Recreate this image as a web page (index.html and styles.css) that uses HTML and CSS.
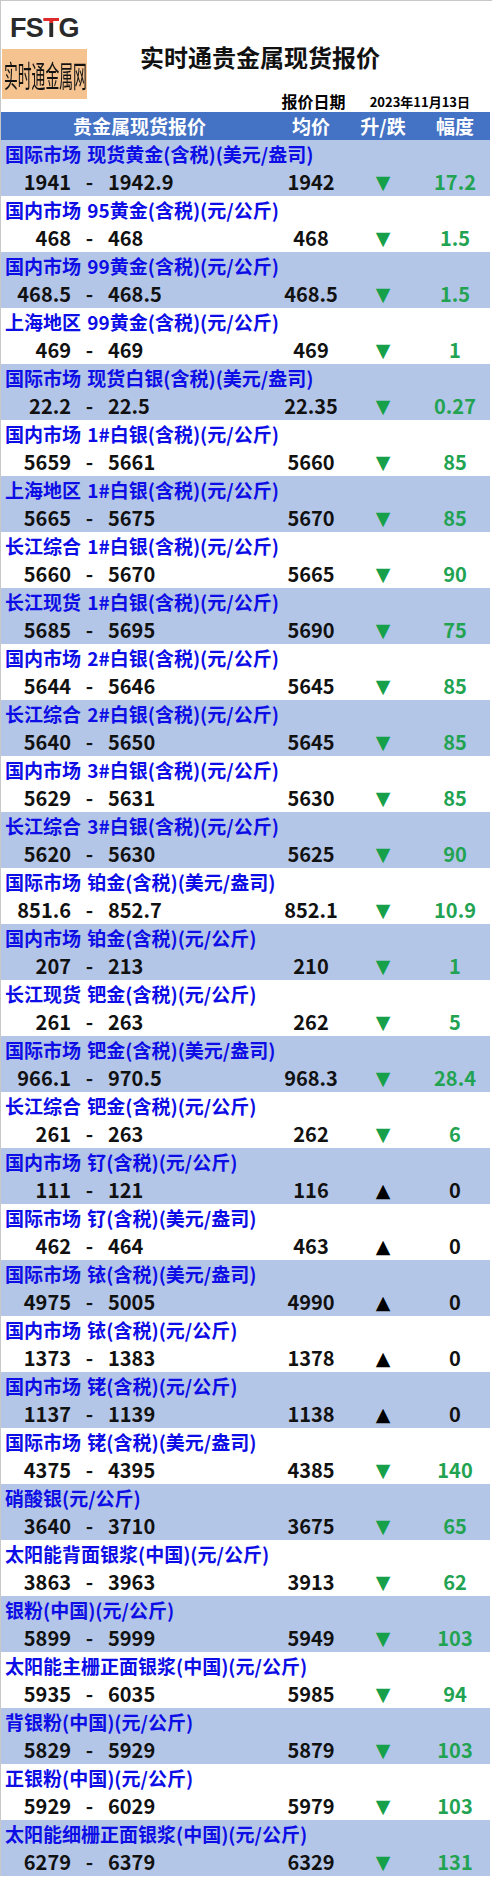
FILE: index.html
```html
<!DOCTYPE html>
<html lang="zh-CN">
<head>
<meta charset="utf-8">
<title>实时通贵金属现货报价</title>
<link rel="stylesheet" href="styles.css">
</head>
<body>
<div class="page">
  <div class="top">
    <div class="brand">
      <div class="logo">FS<span class="t">T</span>G</div>
      <div class="tag"><span class="tag-text">实时通金属网</span></div>
    </div>
    <div class="head">
      <div class="title">实时通贵金属现货报价</div>
      <div class="date"><span class="date-label">报价日期</span><span class="date-value">2023年11月13日</span></div>
    </div>
  </div>

  <div class="thead">
    <span class="th-name">贵金属现货报价</span>
    <span class="th-avg">均价</span>
    <span class="th-dir">升/跌</span>
    <span class="th-amp">幅度</span>
  </div>

  <div class="item alt"><div class="name">国际市场 现货黄金(含税)(美元/盎司)</div><div class="vals"><span class="lo">1941</span><span class="dash">-</span><span class="hi">1942.9</span><span class="avg">1942</span><span class="dir down">▼</span><span class="amp down">17.2</span></div></div>
  <div class="item"><div class="name">国内市场 95黄金(含税)(元/公斤)</div><div class="vals"><span class="lo">468</span><span class="dash">-</span><span class="hi">468</span><span class="avg">468</span><span class="dir down">▼</span><span class="amp down">1.5</span></div></div>
  <div class="item alt"><div class="name">国内市场 99黄金(含税)(元/公斤)</div><div class="vals"><span class="lo">468.5</span><span class="dash">-</span><span class="hi">468.5</span><span class="avg">468.5</span><span class="dir down">▼</span><span class="amp down">1.5</span></div></div>
  <div class="item"><div class="name">上海地区 99黄金(含税)(元/公斤)</div><div class="vals"><span class="lo">469</span><span class="dash">-</span><span class="hi">469</span><span class="avg">469</span><span class="dir down">▼</span><span class="amp down">1</span></div></div>
  <div class="item alt"><div class="name">国际市场 现货白银(含税)(美元/盎司)</div><div class="vals"><span class="lo">22.2</span><span class="dash">-</span><span class="hi">22.5</span><span class="avg">22.35</span><span class="dir down">▼</span><span class="amp down">0.27</span></div></div>
  <div class="item"><div class="name">国内市场 1#白银(含税)(元/公斤)</div><div class="vals"><span class="lo">5659</span><span class="dash">-</span><span class="hi">5661</span><span class="avg">5660</span><span class="dir down">▼</span><span class="amp down">85</span></div></div>
  <div class="item alt"><div class="name">上海地区 1#白银(含税)(元/公斤)</div><div class="vals"><span class="lo">5665</span><span class="dash">-</span><span class="hi">5675</span><span class="avg">5670</span><span class="dir down">▼</span><span class="amp down">85</span></div></div>
  <div class="item"><div class="name">长江综合 1#白银(含税)(元/公斤)</div><div class="vals"><span class="lo">5660</span><span class="dash">-</span><span class="hi">5670</span><span class="avg">5665</span><span class="dir down">▼</span><span class="amp down">90</span></div></div>
  <div class="item alt"><div class="name">长江现货 1#白银(含税)(元/公斤)</div><div class="vals"><span class="lo">5685</span><span class="dash">-</span><span class="hi">5695</span><span class="avg">5690</span><span class="dir down">▼</span><span class="amp down">75</span></div></div>
  <div class="item"><div class="name">国内市场 2#白银(含税)(元/公斤)</div><div class="vals"><span class="lo">5644</span><span class="dash">-</span><span class="hi">5646</span><span class="avg">5645</span><span class="dir down">▼</span><span class="amp down">85</span></div></div>
  <div class="item alt"><div class="name">长江综合 2#白银(含税)(元/公斤)</div><div class="vals"><span class="lo">5640</span><span class="dash">-</span><span class="hi">5650</span><span class="avg">5645</span><span class="dir down">▼</span><span class="amp down">85</span></div></div>
  <div class="item"><div class="name">国内市场 3#白银(含税)(元/公斤)</div><div class="vals"><span class="lo">5629</span><span class="dash">-</span><span class="hi">5631</span><span class="avg">5630</span><span class="dir down">▼</span><span class="amp down">85</span></div></div>
  <div class="item alt"><div class="name">长江综合 3#白银(含税)(元/公斤)</div><div class="vals"><span class="lo">5620</span><span class="dash">-</span><span class="hi">5630</span><span class="avg">5625</span><span class="dir down">▼</span><span class="amp down">90</span></div></div>
  <div class="item"><div class="name">国际市场 铂金(含税)(美元/盎司)</div><div class="vals"><span class="lo">851.6</span><span class="dash">-</span><span class="hi">852.7</span><span class="avg">852.1</span><span class="dir down">▼</span><span class="amp down">10.9</span></div></div>
  <div class="item alt"><div class="name">国内市场 铂金(含税)(元/公斤)</div><div class="vals"><span class="lo">207</span><span class="dash">-</span><span class="hi">213</span><span class="avg">210</span><span class="dir down">▼</span><span class="amp down">1</span></div></div>
  <div class="item"><div class="name">长江现货 钯金(含税)(元/公斤)</div><div class="vals"><span class="lo">261</span><span class="dash">-</span><span class="hi">263</span><span class="avg">262</span><span class="dir down">▼</span><span class="amp down">5</span></div></div>
  <div class="item alt"><div class="name">国际市场 钯金(含税)(美元/盎司)</div><div class="vals"><span class="lo">966.1</span><span class="dash">-</span><span class="hi">970.5</span><span class="avg">968.3</span><span class="dir down">▼</span><span class="amp down">28.4</span></div></div>
  <div class="item"><div class="name">长江综合 钯金(含税)(元/公斤)</div><div class="vals"><span class="lo">261</span><span class="dash">-</span><span class="hi">263</span><span class="avg">262</span><span class="dir down">▼</span><span class="amp down">6</span></div></div>
  <div class="item alt"><div class="name">国内市场 钌(含税)(元/公斤)</div><div class="vals"><span class="lo">111</span><span class="dash">-</span><span class="hi">121</span><span class="avg">116</span><span class="dir up">▲</span><span class="amp">0</span></div></div>
  <div class="item"><div class="name">国际市场 钌(含税)(美元/盎司)</div><div class="vals"><span class="lo">462</span><span class="dash">-</span><span class="hi">464</span><span class="avg">463</span><span class="dir up">▲</span><span class="amp">0</span></div></div>
  <div class="item alt"><div class="name">国际市场 铱(含税)(美元/盎司)</div><div class="vals"><span class="lo">4975</span><span class="dash">-</span><span class="hi">5005</span><span class="avg">4990</span><span class="dir up">▲</span><span class="amp">0</span></div></div>
  <div class="item"><div class="name">国内市场 铱(含税)(元/公斤)</div><div class="vals"><span class="lo">1373</span><span class="dash">-</span><span class="hi">1383</span><span class="avg">1378</span><span class="dir up">▲</span><span class="amp">0</span></div></div>
  <div class="item alt"><div class="name">国内市场 铑(含税)(元/公斤)</div><div class="vals"><span class="lo">1137</span><span class="dash">-</span><span class="hi">1139</span><span class="avg">1138</span><span class="dir up">▲</span><span class="amp">0</span></div></div>
  <div class="item"><div class="name">国际市场 铑(含税)(美元/盎司)</div><div class="vals"><span class="lo">4375</span><span class="dash">-</span><span class="hi">4395</span><span class="avg">4385</span><span class="dir down">▼</span><span class="amp down">140</span></div></div>
  <div class="item alt"><div class="name">硝酸银(元/公斤)</div><div class="vals"><span class="lo">3640</span><span class="dash">-</span><span class="hi">3710</span><span class="avg">3675</span><span class="dir down">▼</span><span class="amp down">65</span></div></div>
  <div class="item"><div class="name">太阳能背面银浆(中国)(元/公斤)</div><div class="vals"><span class="lo">3863</span><span class="dash">-</span><span class="hi">3963</span><span class="avg">3913</span><span class="dir down">▼</span><span class="amp down">62</span></div></div>
  <div class="item alt"><div class="name">银粉(中国)(元/公斤)</div><div class="vals"><span class="lo">5899</span><span class="dash">-</span><span class="hi">5999</span><span class="avg">5949</span><span class="dir down">▼</span><span class="amp down">103</span></div></div>
  <div class="item"><div class="name">太阳能主栅正面银浆(中国)(元/公斤)</div><div class="vals"><span class="lo">5935</span><span class="dash">-</span><span class="hi">6035</span><span class="avg">5985</span><span class="dir down">▼</span><span class="amp down">94</span></div></div>
  <div class="item alt"><div class="name">背银粉(中国)(元/公斤)</div><div class="vals"><span class="lo">5829</span><span class="dash">-</span><span class="hi">5929</span><span class="avg">5879</span><span class="dir down">▼</span><span class="amp down">103</span></div></div>
  <div class="item"><div class="name">正银粉(中国)(元/公斤)</div><div class="vals"><span class="lo">5929</span><span class="dash">-</span><span class="hi">6029</span><span class="avg">5979</span><span class="dir down">▼</span><span class="amp down">103</span></div></div>
  <div class="item alt"><div class="name">太阳能细栅正面银浆(中国)(元/公斤)</div><div class="vals"><span class="lo">6279</span><span class="dash">-</span><span class="hi">6379</span><span class="avg">6329</span><span class="dir down">▼</span><span class="amp down">131</span></div></div>
</div>
</body>
</html>
```

FILE: styles.css
```css
html, body {
  margin: 0;
  padding: 0;
  background: #ffffff;
}

.page {
  width: 492px;
  box-sizing: border-box;
  border-top: 1px solid #c8c8c8;
  border-left: 1px solid #c8c8c8;
  padding-right: 2px;
  font-family: "Noto Sans CJK SC", "Noto Sans", sans-serif;
  color: #000;
}

/* ---------- top area ---------- */
.top {
  display: flex;
  height: 111px;
}

.brand {
  width: 89px;
  display: flex;
  flex-direction: column;
}

.logo {
  margin: 12px 0 0 9px;
  font: bold 27px/30px "Liberation Sans", Arial, sans-serif;
  letter-spacing: -0.8px;
  color: #2a2a2a;
}

.logo .t {
  background: linear-gradient(#e0292b 0 32%, #2a2a2a 32% 100%);
  -webkit-background-clip: text;
  background-clip: text;
  color: transparent;
}

.tag {
  margin: 6px 0 0 1px;
  width: 85px;
  height: 50px;
  background: #f4c38f;
  overflow: hidden;
  display: flex;
  align-items: center;
}

.tag-text {
  display: inline-block;
  font-size: 30px;
  line-height: 34px;
  font-weight: 400;
  white-space: nowrap;
  color: #111;
  transform: scaleX(0.46);
  transform-origin: left center;
  margin-left: 2px;
}

.head {
  flex: 1;
  display: flex;
  flex-direction: column;
}

.title {
  margin-top: 41px;
  padding-left: 50px;
  font-size: 24px;
  line-height: 30px;
  font-weight: 700;
  color: #111;
}

.date {
  margin-top: auto;
  height: 22px;
  display: flex;
  justify-content: flex-end;
  align-items: center;
  gap: 24px;
  padding-right: 20px;
  font-weight: 700;
}

.date-label {
  font-size: 16px;
}

.date-value {
  font-size: 13px;
}

/* ---------- table ---------- */
.thead,
.vals {
  display: grid;
  grid-template-columns: 70px 37px 158px 90px 54px 80px;
  align-items: center;
}

.thead {
  height: 28px;
  background: #4472c4;
  color: #fff;
  font-size: 19px;
  line-height: 28px;
  font-weight: 700;
}

.th-name {
  grid-column: 1 / 4;
  padding-left: 12px;
  text-align: center;
}

.th-avg,
.th-dir {
  text-align: center;
}

.th-amp {
  text-align: center;
  padding-left: 10px;
}

.item {
  height: 56px;
  background: #ffffff;
}

.item.alt {
  background: #b4c6e7;
}

.name {
  height: 28px;
  padding-left: 4px;
  font-size: 19px;
  line-height: 28px;
  font-weight: 700;
  color: #0d0de6;
  white-space: nowrap;
  word-spacing: 2px;
}

.vals {
  height: 28px;
  font-size: 20px;
  line-height: 28px;
  font-weight: 700;
  color: #111;
}

.lo {
  text-align: right;
}

.dash {
  text-align: center;
}

.hi {
  text-align: left;
}

.avg {
  text-align: center;
}

.dir {
  text-align: center;
  font-family: "DejaVu Sans", sans-serif;
  font-size: 19px;
  line-height: 28px;
}

.dir.down {
  color: #17a04a;
}

.dir.up {
  color: #000;
}

.amp {
  text-align: center;
  padding-left: 10px;
}

.amp.down {
  color: #22a352;
}
```
